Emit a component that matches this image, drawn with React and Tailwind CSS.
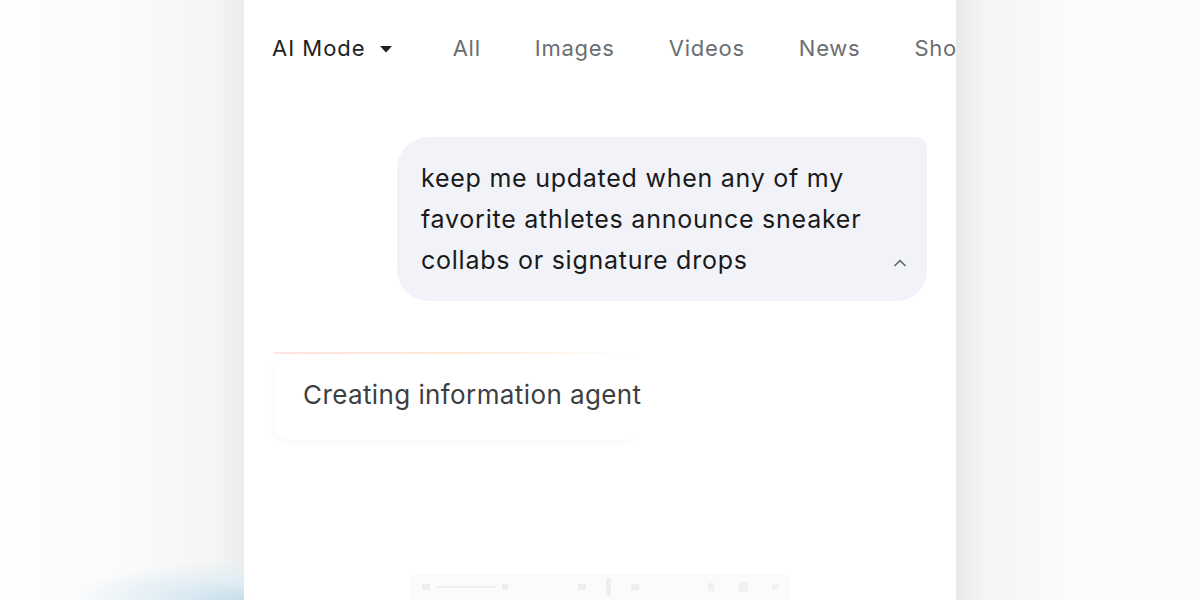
import { ChevronUp } from 'lucide-react';

const TABS = ['All', 'Images', 'Videos', 'News', 'Shopping'];

export default function App() {
  return (
    <div className="relative flex h-[600px] w-[1200px] overflow-hidden bg-white" style={{ fontFamily: 'Inter, Roboto, "Noto Sans", sans-serif' }}>
      {/* Left gutter */}
      <div className="relative w-[244px] shrink-0 bg-[linear-gradient(to_left,#ececec,#f5f5f5_30px,#fbfbfb_120px,#fefefe)]">
        <div className="absolute bottom-0 left-0 h-[50px] w-full bg-[radial-gradient(ellipse_90%_100%_at_bottom_right,#c6ddea,#e3eef5_40%,transparent_80%)]" />
      </div>

      {/* Phone panel */}
      <div className="flex w-[712px] shrink-0 flex-col overflow-hidden bg-white">
        {/* Tabs */}
        <div className="flex h-[96px] shrink-0 items-center whitespace-nowrap pl-[28px]">
          <div className="flex items-center text-[22px] tracking-[1px] text-[#1f1f1f]">
            <span>AI Mode</span>
            <svg width="12" height="7" viewBox="0 0 12 7" className="ml-[14px] mt-[2px]">
              <path d="M0 0 L12 0 L6 6.5 Z" fill="#1f1f1f" />
            </svg>
          </div>
          <div className="ml-[61px] flex items-center gap-[54px] text-[22px] tracking-[0.75px] text-[#6b6e72]">
            {TABS.map(t => (
              <span key={t}>{t}</span>
            ))}
          </div>
        </div>

        {/* User message bubble */}
        <div className="mr-[29px] mt-[41px] flex justify-end">
          <div className="relative w-[530px] rounded-l-[32px] rounded-tr-[10px] rounded-br-[30px] bg-[#f1f3f8] pb-[20px] pl-[24px] pr-[40px] pt-[21px]">
            <p className="text-[25px] leading-[41px] tracking-[0.75px] text-[#1a1a1a]">
              keep me updated when any of my favorite athletes announce sneaker collabs or signature drops
            </p>
            <ChevronUp size={20} strokeWidth={2} className="absolute bottom-[28px] right-[17px] text-[#5f6368]" />
          </div>
        </div>

        {/* Agent status card */}
        <div className="ml-[30px] mt-[51px] w-[370px]">
          <div className="h-[2px] w-[362px] rounded-full bg-gradient-to-r from-[#fde3e3] via-[#fde9d4] to-transparent" />
          <div className="h-[86px] rounded-b-[16px] bg-white pl-[29px] pt-[21px] shadow-[-4px_6px_10px_-6px_rgba(0,0,0,0.05)]">
            <span className="text-[26px] tracking-[0.4px] text-[#3c4043]">Creating information agent</span>
          </div>
        </div>

        {/* Faded bottom toolbar */}
        <div className="mt-auto flex justify-center">
          <div className="flex h-[26px] w-[380px] items-center justify-between rounded-t-[6px] bg-[#fafafa] px-[12px] opacity-70">
            <div className="flex items-center gap-[6px]">
              <div className="h-[6px] w-[8px] bg-[#e6e6e6]" />
              <div className="h-[2px] w-[60px] bg-[#ececec]" />
              <div className="h-[6px] w-[6px] bg-[#e6e6e6]" />
            </div>
            <div className="flex items-center gap-[20px]">
              <div className="h-[6px] w-[8px] bg-[#e8e8e8]" />
              <div className="h-[18px] w-[5px] rounded-full bg-[#e8e8e8]" />
              <div className="h-[6px] w-[8px] bg-[#e8e8e8]" />
            </div>
            <div className="flex items-center gap-[24px]">
              <div className="h-[8px] w-[6px] bg-[#ececec]" />
              <div className="h-[10px] w-[10px] rounded-sm bg-[#ececec]" />
              <div className="h-[6px] w-[6px] bg-[#ececec]" />
            </div>
          </div>
        </div>
      </div>

      {/* Right gutter */}
      <div className="flex-1 bg-[linear-gradient(to_right,#e9e9e9,#f5f5f5_30px,#fbfbfb_110px,#fdfdfd)]" />
    </div>
  );
}
